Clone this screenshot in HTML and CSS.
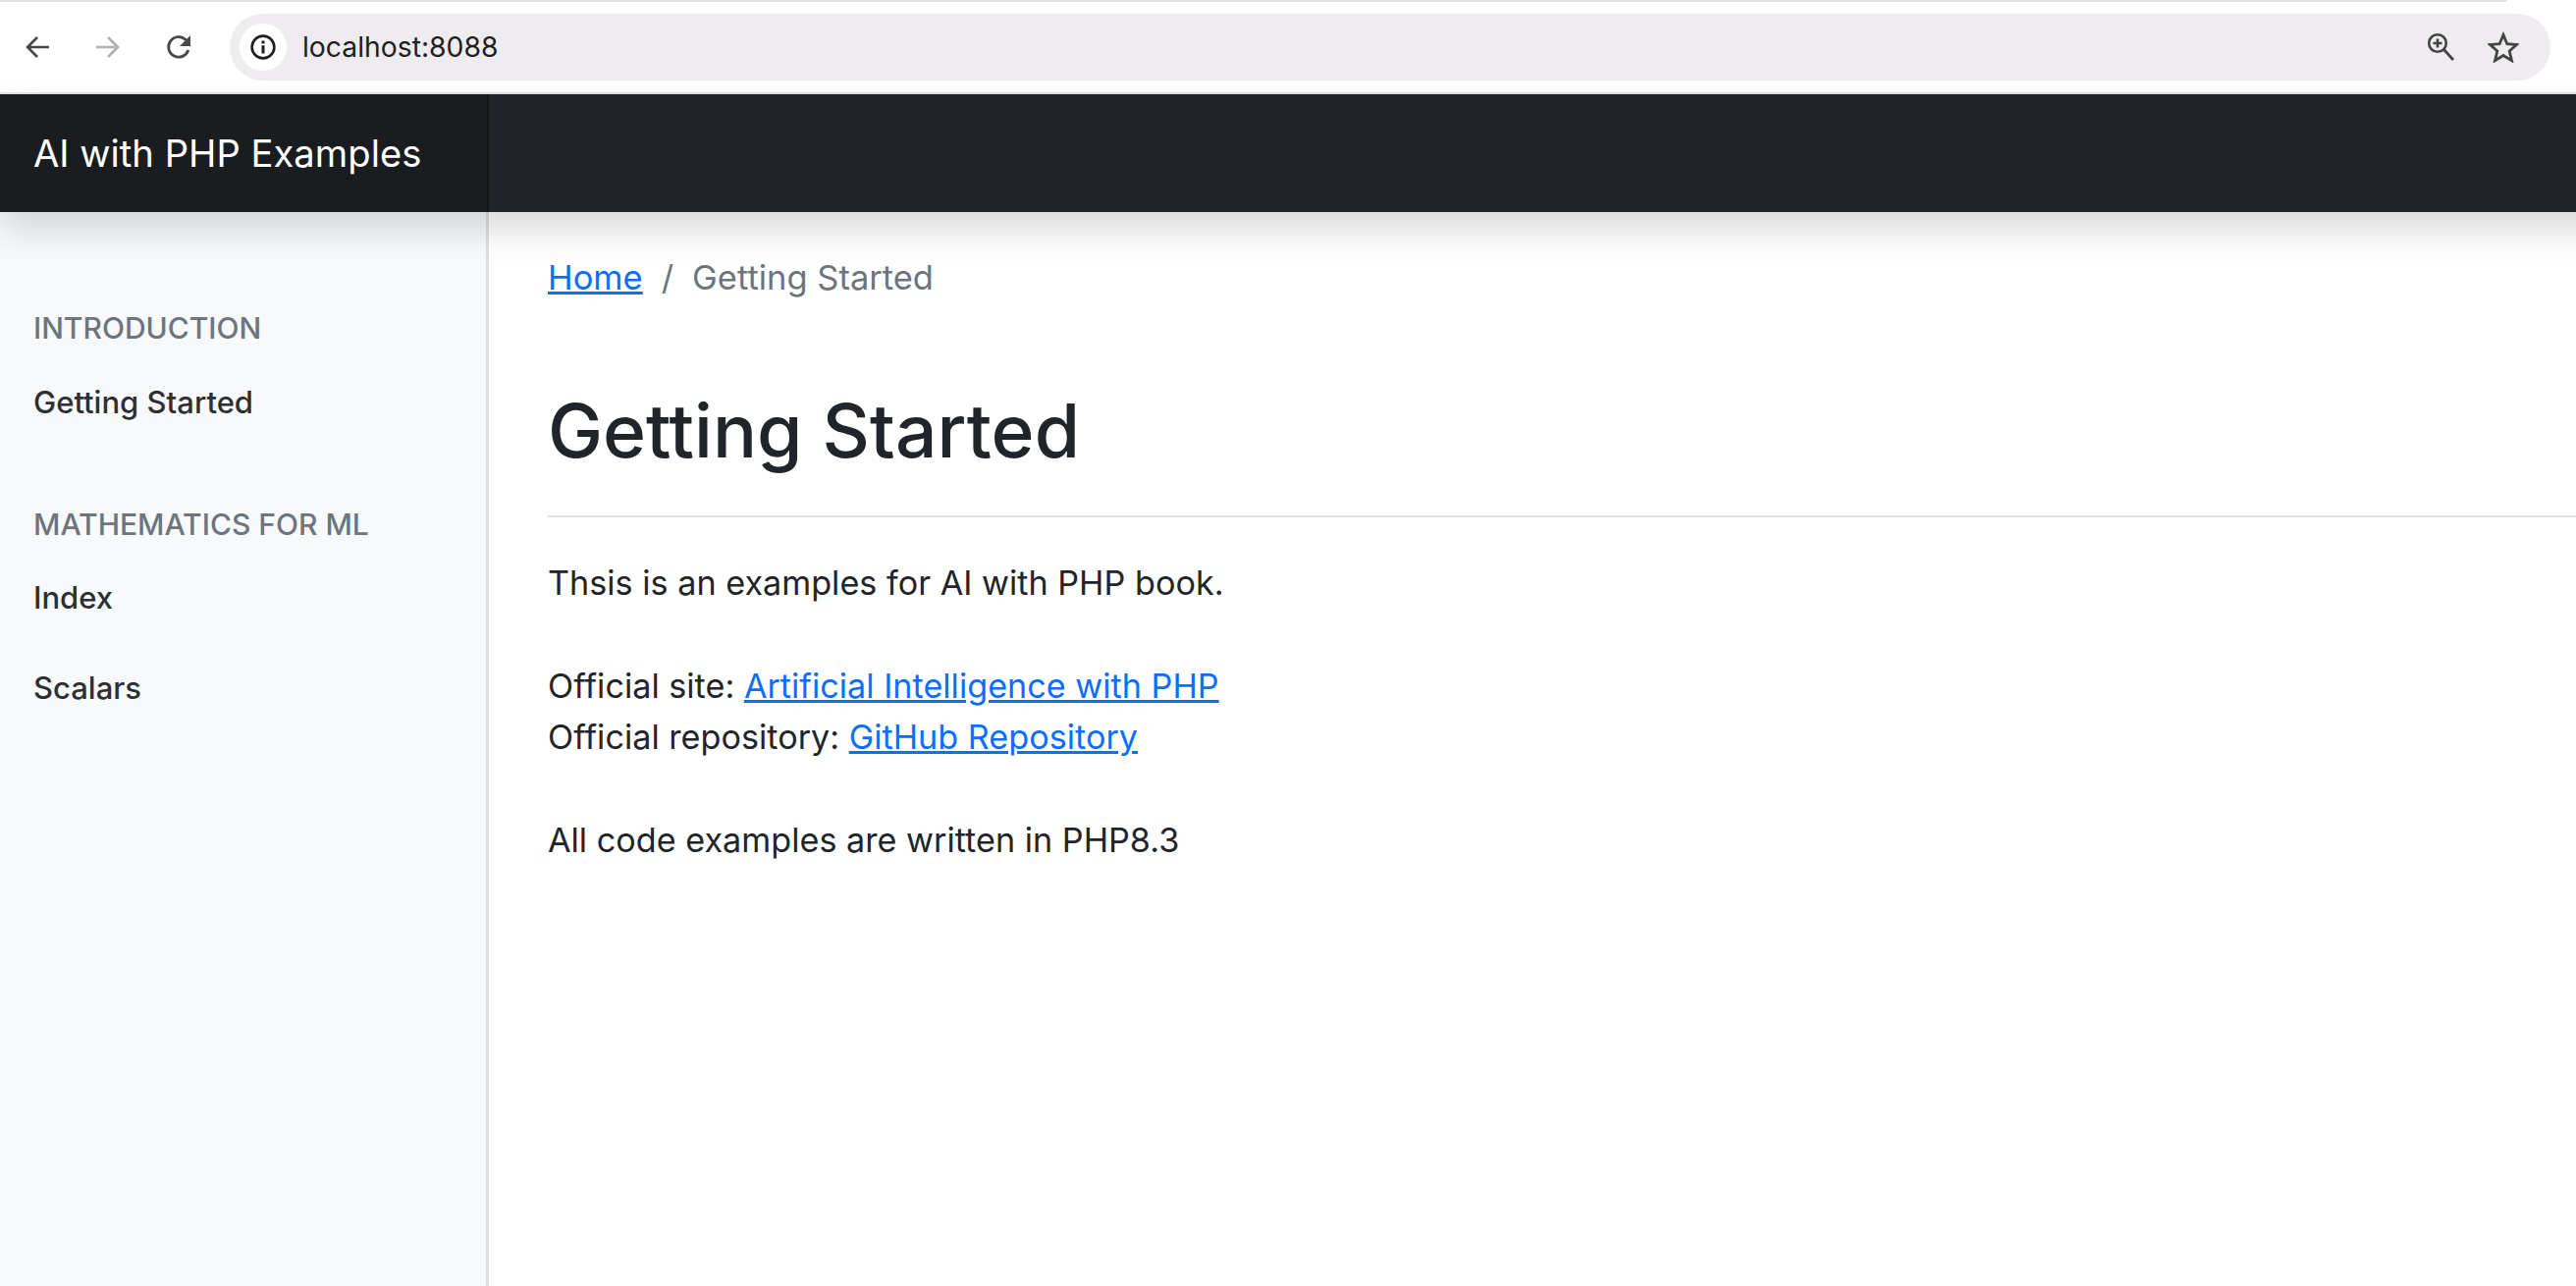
FILE: index.html
```html
<!DOCTYPE html>
<html lang="en">
<head>
<meta charset="utf-8">
<title>AI with PHP Examples</title>
<link rel="stylesheet" href="styles.css">
</head>
<body>
<div class="strip"><div class="strip-line"></div></div>
<header class="toolbar">
  <div class="nav-icons">
    <svg class="ic" viewBox="0 0 24 24"><path d="M24 12H2M12 2 2 12l10 10" fill="none" stroke="#484848" stroke-width="2.600"/></svg>
    <svg class="ic" viewBox="0 0 24 24"><path d="M0 12h22M12 2l10 10-10 10" fill="none" stroke="#b0b0b0" stroke-width="2.600"/></svg>
    <svg class="ic" viewBox="0 0 24 24"><path d="M21.800 15a10.300 10.300 0 1 1-2.600-10.500L22 7.500" fill="none" stroke="#484848" stroke-width="2.800"/><path d="M24 0v11H13z" fill="#484848"/></svg>
  </div>
  <div class="omnibox">
    <div class="chip"><svg class="info" viewBox="0 0 24 24"><circle cx="12" cy="12" r="10.500" fill="none" stroke="#1f1f1f" stroke-width="2.400"/><path d="M10.600 10.300h2.800V18h-2.800zM10.600 6h2.800v2.800h-2.800z" fill="#1f1f1f"/></svg></div>
    <span class="url">localhost:8088</span>
    <svg class="zoom-ic" viewBox="0 0 28 30"><circle cx="11" cy="11" r="8.800" fill="none" stroke="#444" stroke-width="2.600"/><path d="M17 17l10 11" stroke="#444" stroke-width="2.800" fill="none"/><path d="M11 6.500v9M6.500 11h9" stroke="#444" stroke-width="2.600" fill="none"/></svg>
    <svg class="star-ic" viewBox="0 0 32 32"><path d="M16 3.500l3.800 9.200 9.900.8-7.500 6.500 2.300 9.700L16 24.500l-8.500 5.200 2.300-9.700-7.500-6.500 9.900-.8z" fill="none" stroke="#444" stroke-width="2.800"/></svg>
  </div>
</header>
<div class="viewport">
  <nav class="navbar">
    <a class="brand">AI with PHP Examples</a>
  </nav>
  <div class="page">
    <aside class="sidebar">
      <h6 class="side-head first">INTRODUCTION</h6>
      <a class="side-link">Getting Started</a>
      <h6 class="side-head">MATHEMATICS FOR ML</h6>
      <a class="side-link">Index</a>
      <a class="side-link">Scalars</a>
    </aside>
    <main class="content">
      <ol class="crumbs">
        <li><a class="link">Home</a></li>
        <li class="sep">/</li>
        <li class="current">Getting Started</li>
      </ol>
      <h1 class="title">Getting Started</h1>
      <p class="para">Thsis is an examples for AI with PHP book.</p>
      <p class="para">Official site: <a class="link">Artificial Intelligence with PHP</a><br>Official repository: <a class="link">GitHub Repository</a></p>
      <p class="para">All code examples are written in PHP8.3</p>
    </main>
  </div>
</div>
</body>
</html>
```
FILE: styles.css
```css
* { box-sizing: border-box; }
html, body { margin: 0; height: 100%; }
body {
  display: flex;
  flex-direction: column;
  height: 1310px;
  overflow: hidden;
  background: #fff;
  font-family: Inter, "Liberation Sans", sans-serif;
  color: #212529;
}
.strip { height: 2px; background: #fff; flex: none; }
.strip-line { height: 2px; width: 2554px; background: #e2e2e2; border-radius: 0 0 6px 0; }
.toolbar {
  flex: none;
  height: 94px;
  display: flex;
  align-items: center;
  padding: 0 26px 0 0;
  background: #fff;
  border-bottom: 2px solid #e3e3e3;
}
.nav-icons {
  display: flex;
  gap: 48px;
  padding-left: 26px;
  width: 234px;
  flex: none;
}
.ic { width: 24px; height: 24px; display: block; overflow: visible; flex: none; }
.omnibox {
  flex: 1;
  height: 68px;
  border-radius: 34px;
  background: #eeecee;
  display: flex;
  align-items: center;
  padding: 0 32px 0 10px;
}
.chip {
  width: 48px;
  height: 48px;
  border-radius: 24px;
  background: #fff;
  display: flex;
  align-items: center;
  justify-content: center;
  flex: none;
}
.info { width: 26px; height: 26px; display: block; }
.url {
  margin-left: 16px;
  flex: 1;
  font-size: 28.300px;
  color: #1f1f1f;
}
.zoom-ic { width: 28px; height: 30px; margin-right: 34px; display: block; }
.star-ic { width: 32px; height: 32px; display: block; }
.viewport { flex: 1; display: flex; flex-direction: column; min-height: 0; }
.navbar {
  flex: none;
  height: 120px;
  background: #212529;
  display: flex;
  margin-right: -80px;
  box-shadow: 0 18px 35px rgba(0, 0, 0, .15);
  position: relative;
  z-index: 1;
}
.brand {
  width: 498px;
  display: flex;
  align-items: center;
  padding-left: 34px;
  font-size: 38.200px;
  color: #fff;
  background: #1a1d20;
  box-shadow: inset -2px 0 0 rgba(0, 0, 0, .25);
}
.page { flex: 1; display: flex; min-height: 0; }
.sidebar {
  width: 498px;
  flex: none;
  background: #f8f9fa;
  border-right: 3px solid #dcdfe2;
  padding: 0 34px;
  display: flex;
  flex-direction: column;
}
.side-head {
  margin: 86px 0 0;
  font-size: 30px;
  line-height: 36px;
  font-weight: 500;
  color: #6c757d;
}
.side-head.first { margin-top: 100px; }
.side-link {
  font-size: 31px;
  line-height: 40px;
  font-weight: 500;
  color: #2c3034;
  margin-top: 52px;
}
.side-head + .side-link { margin-top: 37px; }
.side-head.first + .side-link { margin-top: 38px; }
.content { flex: 1; padding: 45px 0 0 60px; min-width: 0; }
.crumbs {
  list-style: none;
  margin: 0;
  padding: 0;
  display: flex;
  gap: 19px;
  font-size: 34.500px;
  line-height: 44px;
}
.sep, .current { color: #6c757d; }
.link { color: #0d6efd; text-decoration: underline; }
.title {
  margin: 88px 0 0;
  padding-bottom: 40px;
  font-size: 75px;
  line-height: 92px;
  font-weight: 500;
  border-bottom: 2px solid #dee2e6;
}
.para {
  margin: 53px 0 0;
  font-size: 34.200px;
  line-height: 52px;
}
.title + .para { margin-top: 41px; }
```
